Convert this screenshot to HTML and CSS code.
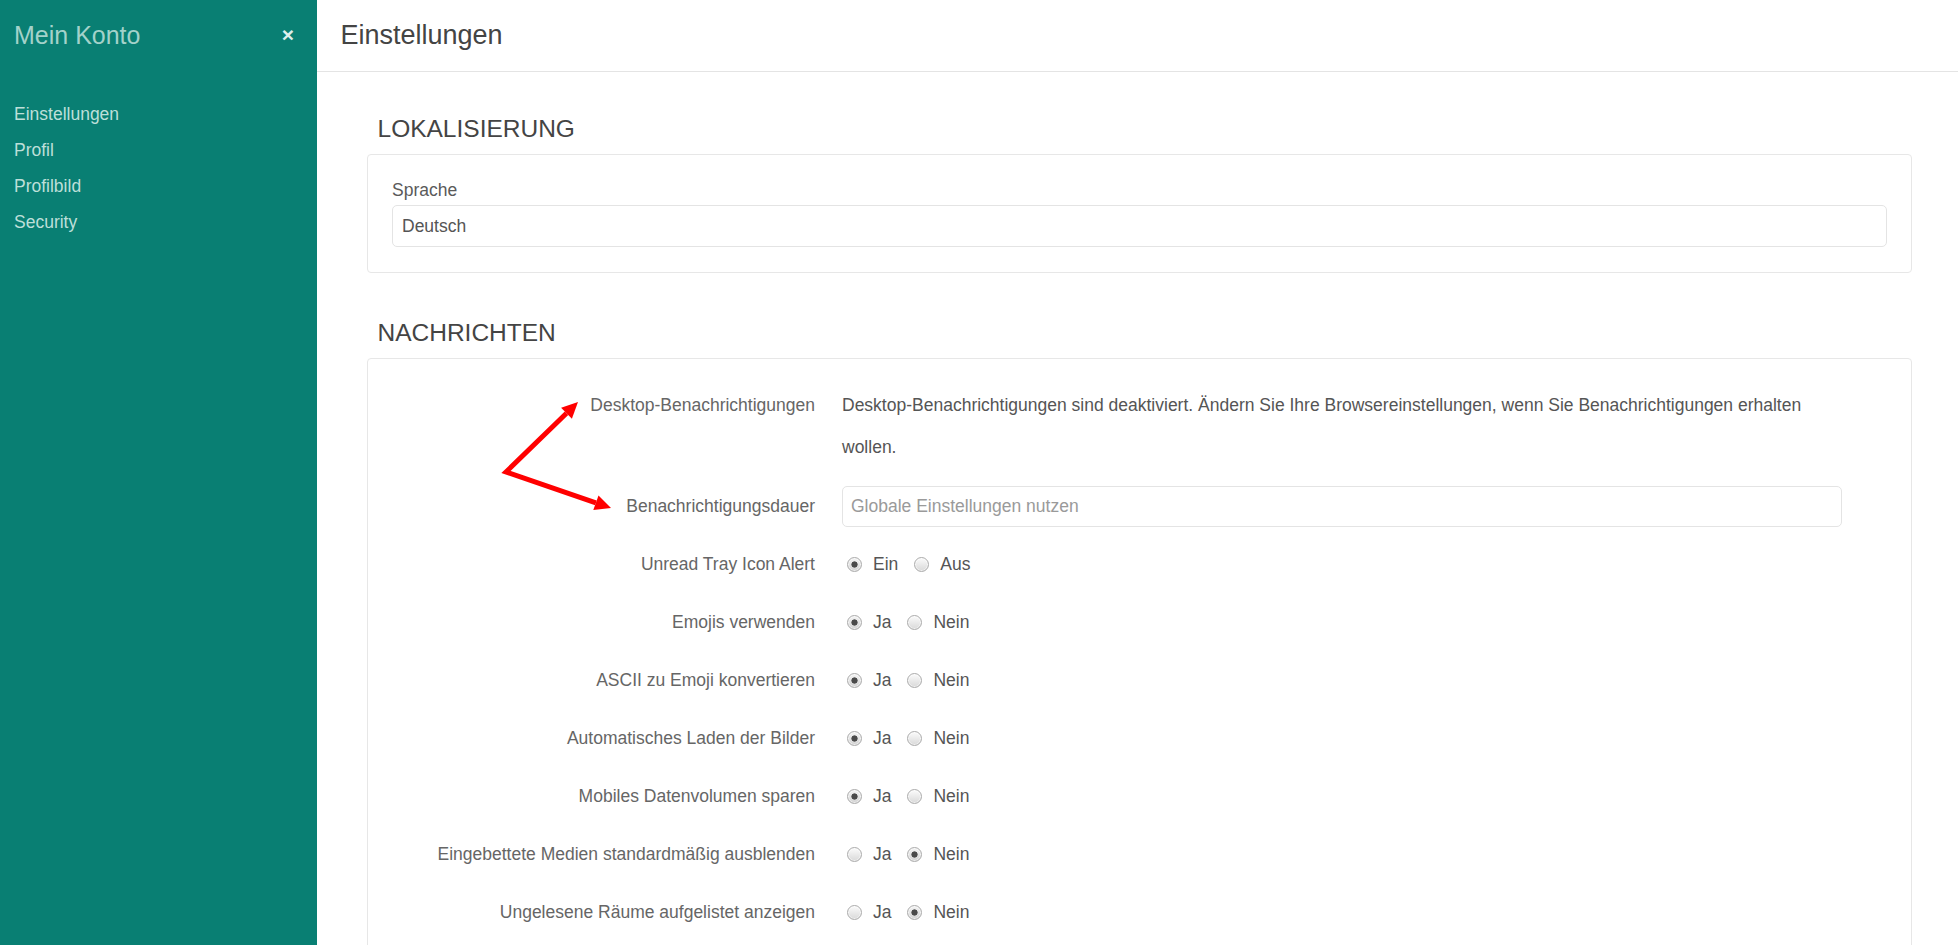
FILE: index.html
```html
<!DOCTYPE html>
<html lang="de">
<head>
<meta charset="utf-8">
<title>Mein Konto – Einstellungen</title>
<link rel="stylesheet" href="styles.css">
</head>
<body>
<div class="app">
  <aside class="sidebar">
    <div class="sidebar-head">
      <span class="sidebar-title">Mein Konto</span>
      <span class="close">×</span>
    </div>
    <nav class="sidebar-nav">
      <a class="nav-link" href="#">Einstellungen</a>
      <a class="nav-link" href="#">Profil</a>
      <a class="nav-link" href="#">Profilbild</a>
      <a class="nav-link" href="#">Security</a>
    </nav>
  </aside>

  <main class="main">
    <header class="page-head">
      <h1 class="page-title">Einstellungen</h1>
    </header>

    <div class="content">
      <section class="section">
        <h2 class="section-title">LOKALISIERUNG</h2>
        <div class="panel panel-stack">
          <label class="field-label">Sprache</label>
          <input class="text-input" type="text" value="Deutsch" readonly>
        </div>
      </section>

      <section class="section">
        <h2 class="section-title">NACHRICHTEN</h2>
        <div class="panel">
          <div class="form-grid">
            <div class="form-label">Desktop-Benachrichtigungen</div>
            <div class="form-value desc">Desktop-Benachrichtigungen sind deaktiviert. Ändern Sie Ihre Browsereinstellungen, wenn Sie Benachrichtigungen erhalten wollen.</div>

            <div class="form-label label-short">Benachrichtigungsdauer</div>
            <div class="form-value value-short"><input class="text-input input-short" type="text" placeholder="Globale Einstellungen nutzen"></div>

            <div class="form-label">Unread Tray Icon Alert</div>
            <div class="form-value radio-group">
              <label class="option"><input class="radio" type="radio" name="r1" checked>Ein</label>
              <label class="option"><input class="radio" type="radio" name="r1">Aus</label>
            </div>

            <div class="form-label">Emojis verwenden</div>
            <div class="form-value radio-group">
              <label class="option"><input class="radio" type="radio" name="r2" checked>Ja</label>
              <label class="option"><input class="radio" type="radio" name="r2">Nein</label>
            </div>

            <div class="form-label">ASCII zu Emoji konvertieren</div>
            <div class="form-value radio-group">
              <label class="option"><input class="radio" type="radio" name="r3" checked>Ja</label>
              <label class="option"><input class="radio" type="radio" name="r3">Nein</label>
            </div>

            <div class="form-label">Automatisches Laden der Bilder</div>
            <div class="form-value radio-group">
              <label class="option"><input class="radio" type="radio" name="r4" checked>Ja</label>
              <label class="option"><input class="radio" type="radio" name="r4">Nein</label>
            </div>

            <div class="form-label">Mobiles Datenvolumen sparen</div>
            <div class="form-value radio-group">
              <label class="option"><input class="radio" type="radio" name="r5" checked>Ja</label>
              <label class="option"><input class="radio" type="radio" name="r5">Nein</label>
            </div>

            <div class="form-label">Eingebettete Medien standardmäßig ausblenden</div>
            <div class="form-value radio-group">
              <label class="option"><input class="radio" type="radio" name="r6">Ja</label>
              <label class="option"><input class="radio" type="radio" name="r6" checked>Nein</label>
            </div>

            <div class="form-label">Ungelesene Räume aufgelistet anzeigen</div>
            <div class="form-value radio-group">
              <label class="option"><input class="radio" type="radio" name="r7">Ja</label>
              <label class="option"><input class="radio" type="radio" name="r7" checked>Nein</label>
            </div>
          </div>
        </div>
      </section>
    </div>
  </main>

  <svg class="annotation" viewBox="0 0 1958 945" width="1958" height="945" aria-hidden="true">
    <polyline points="566.5,413.2 506,472 595.9,502.8" fill="none" stroke="#ff0000" stroke-width="5" stroke-linejoin="miter" stroke-miterlimit="10"/>
    <polygon points="578,402 571.9,418.7 561.1,407.7" fill="#ff0000"/>
    <polygon points="611,508 593.3,510 598.5,495.6" fill="#ff0000"/>
  </svg>
</div>
</body>
</html>
```

FILE: styles.css
```css
* {
  box-sizing: border-box;
}

html,
body {
  margin: 0;
  height: 100%;
}

body {
  font-family: "Liberation Sans", Arial, sans-serif;
  font-size: 17.5px;
  color: #555;
  background: #fff;
  overflow: hidden;
}

.app {
  position: relative;
  display: flex;
  height: 100vh;
  overflow: hidden;
}

/* Sidebar */
.sidebar {
  flex: none;
  width: 317px;
  background: #097f73;
  padding: 20px 23px 0 14px;
}

.sidebar-head {
  display: flex;
  justify-content: space-between;
  align-items: flex-start;
  height: 30px;
}

.sidebar-title {
  font-size: 25px;
  line-height: 30px;
  color: #a3d2ca;
}

.close {
  font-size: 21px;
  line-height: 30px;
  font-weight: bold;
  color: #dcefec;
}

.sidebar-nav {
  display: flex;
  flex-direction: column;
  padding-top: 45.5px;
}

.nav-link {
  font-size: 17.5px;
  line-height: 36px;
  color: #bddfd9;
  text-decoration: none;
}

/* Main */
.main {
  flex: 1;
  min-width: 0;
  display: flex;
  flex-direction: column;
}

.page-head {
  padding: 17px 24px 18px 23.5px;
  border-bottom: 1px solid #e4e4e4;
}

.page-title {
  margin: 0;
  font-size: 27px;
  line-height: 36px;
  font-weight: normal;
  color: #444;
}

.content {
  padding: 42px 46px 0 50px;
}

.section + .section {
  margin-top: 45px;
}

.section-title {
  margin: 0 0 10px;
  padding-left: 10.5px;
  font-size: 24.5px;
  line-height: 30px;
  font-weight: normal;
  color: #444;
}

.panel {
  border: 1px solid #e7e7e7;
  border-radius: 4px;
  padding: 25px 24px;
}

.panel-stack {
  display: flex;
  flex-direction: column;
  gap: 4px;
}

.field-label {
  line-height: 21px;
  color: #5a5a5a;
}

.text-input {
  display: block;
  width: 100%;
  height: 42px;
  border: 1px solid #e4e4e4;
  border-radius: 5px;
  padding: 0 9px;
  font: inherit;
  font-size: 17.5px;
  color: #555;
  background: #fff;
  outline: none;
}

.text-input::placeholder {
  color: #9a9a9a;
}

.input-short {
  height: 41px;
  padding: 0 8px;
}

/* Form grid */
.form-grid {
  display: grid;
  grid-template-columns: 423px 1000px;
  column-gap: 27px;
  row-gap: 16px;
}

.form-label {
  text-align: right;
  line-height: 42px;
  color: #666;
}

.form-value {
  line-height: 42px;
  min-height: 42px;
  color: #555;
}

.desc {
  margin-bottom: 2px;
}

.label-short {
  line-height: 41px;
}

.value-short {
  min-height: 0;
  line-height: 41px;
}

.radio-group {
  display: flex;
  align-items: center;
  gap: 11px;
  height: 42px;
}

.option {
  display: inline-flex;
  align-items: center;
  line-height: 42px;
}

.radio {
  appearance: none;
  -webkit-appearance: none;
  width: 15px;
  height: 15px;
  margin: 0 11px 0 5px;
  border-radius: 50%;
  border: 1px solid #ababab;
  background: linear-gradient(#fbfbfb, #d9d9d9);
  box-shadow: inset 0 0 0 1px rgba(255, 255, 255, 0.6);
}

.radio:checked {
  background:
    radial-gradient(circle, #4a4a4a 0 2.8px, transparent 3.4px),
    linear-gradient(#f4f4f4, #d2d2d2);
}

/* Annotation overlay */
.annotation {
  position: absolute;
  left: 0;
  top: 0;
  pointer-events: none;
}
```
